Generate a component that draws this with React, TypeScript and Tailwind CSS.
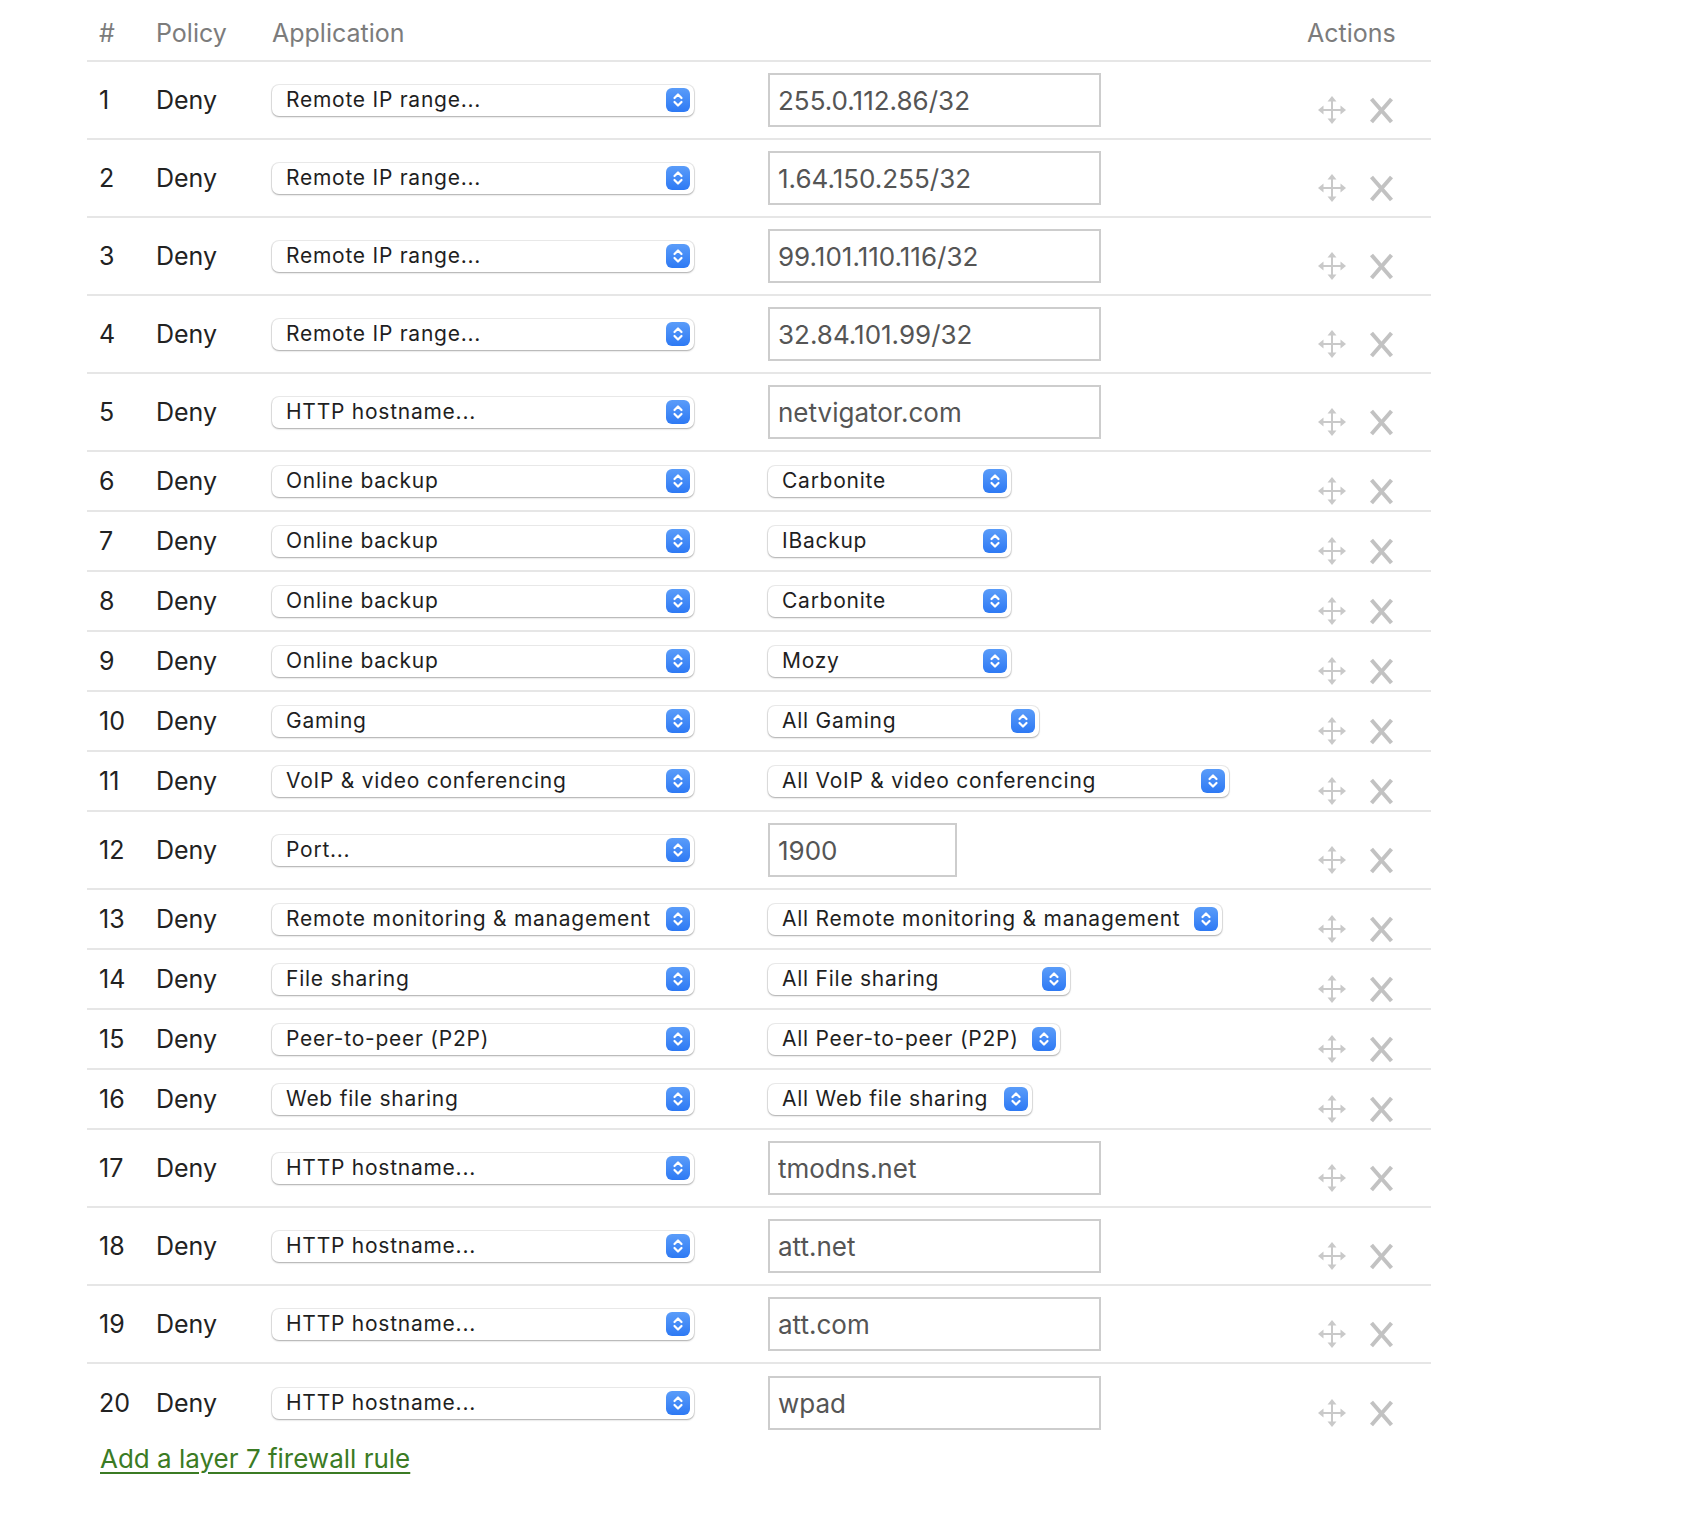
import React from 'react'

type Rule = {
    app: string
    kind: 'text' | 'port' | 'select'
    value: string
    width?: string
}

const rules: Rule[] = [
    { app: 'Remote IP range...', kind: 'text', value: '255.0.112.86/32' },
    { app: 'Remote IP range...', kind: 'text', value: '1.64.150.255/32' },
    { app: 'Remote IP range...', kind: 'text', value: '99.101.110.116/32' },
    { app: 'Remote IP range...', kind: 'text', value: '32.84.101.99/32' },
    { app: 'HTTP hostname...', kind: 'text', value: 'netvigator.com' },
    { app: 'Online backup', kind: 'select', value: 'Carbonite', width: 'w-[243px]' },
    { app: 'Online backup', kind: 'select', value: 'IBackup', width: 'w-[243px]' },
    { app: 'Online backup', kind: 'select', value: 'Carbonite', width: 'w-[243px]' },
    { app: 'Online backup', kind: 'select', value: 'Mozy', width: 'w-[243px]' },
    { app: 'Gaming', kind: 'select', value: 'All Gaming', width: 'w-[271px]' },
    { app: 'VoIP & video conferencing', kind: 'select', value: 'All VoIP & video conferencing', width: 'w-[461px]' },
    { app: 'Port...', kind: 'port', value: '1900' },
    { app: 'Remote monitoring & management', kind: 'select', value: 'All Remote monitoring & management', width: 'w-[454px]' },
    { app: 'File sharing', kind: 'select', value: 'All File sharing', width: 'w-[302px]' },
    { app: 'Peer-to-peer (P2P)', kind: 'select', value: 'All Peer-to-peer (P2P)', width: 'w-[292px]' },
    { app: 'Web file sharing', kind: 'select', value: 'All Web file sharing', width: 'w-[264px]' },
    { app: 'HTTP hostname...', kind: 'text', value: 'tmodns.net' },
    { app: 'HTTP hostname...', kind: 'text', value: 'att.net' },
    { app: 'HTTP hostname...', kind: 'text', value: 'att.com' },
    { app: 'HTTP hostname...', kind: 'text', value: 'wpad' },
]

function Popup({ label, className }: { label: string; className: string }) {
    return (
        <div className={`${className} h-[31px] flex items-center pl-[14px] pr-[4px] bg-white rounded-[7px] shadow-[0_0_0_1px_rgba(0,0,0,0.08),0_1px_2px_rgba(0,0,0,0.28)]`}>
            <span className="text-[21px] tracking-[0.75px] text-[#1f1f1f] whitespace-nowrap">{label}</span>
            <span className="ml-auto w-6 h-6 rounded-[6px] bg-gradient-to-b from-[#5a9cf9] to-[#2d79f4] flex items-center justify-center shrink-0">
                <svg width="14" height="18" viewBox="0 0 14 18" fill="none" stroke="white" strokeWidth="2.2" strokeLinecap="round" strokeLinejoin="round"><path d="m3.5 7 3.5-3.5 3.5 3.5" /><path d="m3.5 11 3.5 3.5 3.5-3.5" /></svg>
            </span>
        </div>
    )
}

function MoveIcon() {
    return (
        <svg width="30" height="30" viewBox="0 0 30 30" fill="#c9c9c9" stroke="#c9c9c9" strokeWidth="2">
            <line x1="15" y1="5" x2="15" y2="25" />
            <line x1="5" y1="15" x2="25" y2="15" />
            <polygon stroke="none" points="15,1 10.5,6.5 19.5,6.5" />
            <polygon stroke="none" points="15,29 10.5,23.5 19.5,23.5" />
            <polygon stroke="none" points="1,15 6.5,10.5 6.5,19.5" />
            <polygon stroke="none" points="29,15 23.5,10.5 23.5,19.5" />
        </svg>
    )
}

function CloseIcon() {
    return (
        <svg width="25" height="27" viewBox="0 0 25 27" fill="none" stroke="#c2c2c2" strokeWidth="4">
            <line x1="2.5" y1="2" x2="22.5" y2="25" />
            <line x1="22.5" y1="2" x2="2.5" y2="25" />
        </svg>
    )
}

export default function App() {
    return (
        <div className="min-h-screen bg-white font-['Inter',sans-serif] pl-[87px]">
            <div className="w-[1344px]">
                {/* Header */}
                <div className="grid grid-cols-[57px_116px_496px_539px_124px] pl-3 h-[62px] pt-[8px] items-center border-b-2 border-[#e6e6e6] text-[25px] text-[#7c7c7c]">
                    <div>#</div>
                    <div>Policy</div>
                    <div>Application</div>
                    <div />
                    <div>Actions</div>
                </div>

                {rules.map((r, i) => {
                    const tall = r.kind !== 'select'
                    const last = i === rules.length - 1
                    return (
                        <div
                            key={i}
                            className={`grid grid-cols-[57px_116px_496px_539px_124px] pl-3 items-center text-[25px] text-[#222] ${tall ? 'h-[78px]' : 'h-[60px]'} ${last ? '' : 'border-b-2 border-[#e6e6e6]'}`}
                        >
                            <div className="pt-[2px]">{i + 1}</div>
                            <div className="pt-[2px]">Deny</div>
                            <div>
                                <Popup label={r.app} className="w-[422px]" />
                            </div>
                            <div>
                                {r.kind === 'select' ? (
                                    <Popup label={r.value} className={r.width ?? ''} />
                                ) : (
                                    <input
                                        readOnly
                                        value={r.value}
                                        className={`${r.kind === 'port' ? 'w-[189px]' : 'w-[333px]'} h-[54px] border-2 border-[#cdcdcd] pl-2 text-[26px] text-[#555] bg-white outline-none`}
                                    />
                                )}
                            </div>
                            <div className="flex items-center gap-[22px] pl-[10px] pt-5">
                                <MoveIcon />
                                <CloseIcon />
                            </div>
                        </div>
                    )
                })}

                <div className="pl-[13px]">
                    <a href="#" className="text-[26px] leading-[34px] text-[#3b7b24] underline decoration-[1.5px] underline-offset-[4px]">
                        Add a layer 7 firewall rule
                    </a>
                </div>
            </div>
        </div>
    )
}
